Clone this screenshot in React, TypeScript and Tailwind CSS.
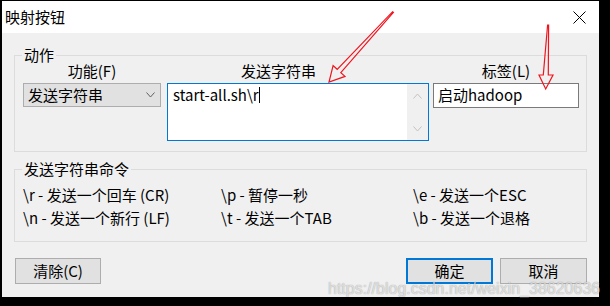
const cmds = [
  ['\\r - 发送一个回车 (CR)', '\\p - 暂停一秒', '\\e - 发送一个ESC'],
  ['\\n - 发送一个新行 (LF)', '\\t - 发送一个TAB', '\\b - 发送一个退格'],
]

function Chevron({ up = false, color = '#606060' }: { up?: boolean; color?: string }) {
  return (
    <svg width="9" height="6" viewBox="0 0 9 6" fill="none">
      <path d={up ? 'M0.5 5.5 L4.5 1 L8.5 5.5' : 'M0.5 0.5 L4.5 5 L8.5 0.5'} stroke={color} strokeWidth="1" />
    </svg>
  )
}

export default function App() {
  return (
    <div className="relative w-[610px] h-[306px] bg-black pt-[1px] pl-[2px] font-['Noto_Sans_CJK_SC',sans-serif] text-[15px] text-black">
      <div className="w-[597px] h-[296px] flex flex-col bg-[#f0f0f0]">
        {/* Title bar */}
        <div className="h-[32px] shrink-0 bg-white flex items-center justify-between pl-[3px] pr-[13px]">
          <span className="leading-[20px]">映射按钮</span>
          <svg width="13" height="13" viewBox="0 0 13 13">
            <path d="M0.5 0.5 L12.5 12.5 M12.5 0.5 L0.5 12.5" stroke="#000" strokeWidth="1" />
          </svg>
        </div>

        <div className="flex flex-col px-[12px] pt-[22px]">
          {/* 动作 */}
          <div className="relative h-[97px] border border-[#dcdcdc] pl-[8px] pr-[7px] flex gap-0">
            <span className="absolute left-[7px] -top-[11px] px-[2px] bg-[#f0f0f0] leading-[20px]">动作</span>

            <div className="w-[138px] flex flex-col">
              <div className="h-[27px] pt-[5px] leading-[20px] text-center">功能(F)</div>
              <div className="h-[24px] border border-[#adadad] bg-[#e1e1e1] flex items-center justify-between pl-[4px] pr-[5px]">
                <span className="leading-[20px]">发送字符串</span>
                <Chevron />
              </div>
            </div>

            <div className="w-[262px] ml-[6px] flex flex-col">
              <div className="h-[27px] pt-[5px] leading-[20px] pl-[74px]">发送字符串</div>
              <div className="h-[58px] border border-[#0078d7] bg-white flex">
                <div className="flex-1 pl-[5px] pt-[1px] leading-[20px] flex items-start">
                  <span>start-all.sh\r</span>
                  <span className="w-[1px] h-[16px] bg-black mt-[2px]" />
                </div>
                <div className="w-[21px] bg-[#f0f0f0] flex flex-col items-center justify-between pt-[9px] pb-[8px]">
                  <Chevron up color="#c2c2c2" />
                  <Chevron color="#c2c2c2" />
                </div>
              </div>
            </div>

            <div className="w-[146px] ml-[4px] flex flex-col">
              <div className="h-[27px] pt-[5px] leading-[20px] text-center">标签(L)</div>
              <div className="h-[25px] border border-[#7a7a7a] bg-white flex items-center pl-[4px] pb-[1px]">
                <span className="leading-[20px]">启动hadoop</span>
              </div>
            </div>
          </div>

          {/* 发送字符串命令 */}
          <div className="relative mt-[17px] h-[73px] border border-[#dcdcdc] pl-[8px] pt-[13px]">
            <span className="absolute left-[7px] -top-[11px] px-[2px] bg-[#f0f0f0] leading-[20px]">发送字符串命令</span>
            <div className="grid grid-cols-[198px_192px_1fr] leading-[23px]">
              {cmds.map((row) =>
                row.map((c) => (
                  <span key={c} className="whitespace-pre">
                    {c}
                  </span>
                ))
              )}
            </div>
          </div>

          {/* Buttons */}
          <div className="mt-[16px] flex items-center">
            <button className="ml-[1px] w-[86px] h-[26px] border border-[#adadad] bg-[#e1e1e1] leading-[20px]">清除(C)</button>
            <div className="flex-1" />
            <button className="w-[87px] h-[26px] border-2 border-[#0078d7] bg-[#e1e1e1] leading-[20px]">确定</button>
            <button className="ml-[7px] w-[87px] h-[26px] border border-[#adadad] bg-[#e1e1e1] leading-[20px]">取消</button>
          </div>
        </div>
      </div>

      {/* Red annotation arrows */}
      <svg className="absolute inset-0 pointer-events-none" width="610" height="306" viewBox="0 0 610 306" fill="none">
        <polygon
          points="393.4,12.3 340.8,72.7 345,76.4 329,82 333.1,65.6 337.2,69.3 392.6,11.7"
          stroke="#f0141e"
          strokeWidth="1.2"
          strokeLinejoin="miter"
        />
        <polygon
          points="548.6,25 548.3,75 553,75 545.7,89 539,75 543.3,75 547.6,25"
          stroke="#f0141e"
          strokeWidth="1.2"
          strokeLinejoin="miter"
        />
      </svg>

      {/* Watermark */}
      <span className="absolute left-[328px] top-[281px] font-['Liberation_Sans',sans-serif] text-[16px] leading-[16px] text-white/70 [text-shadow:0_0_1px_rgba(0,0,0,0.45)] pointer-events-none">
        https://blog.csdn.net/weixin_38620636
      </span>
    </div>
  )
}
